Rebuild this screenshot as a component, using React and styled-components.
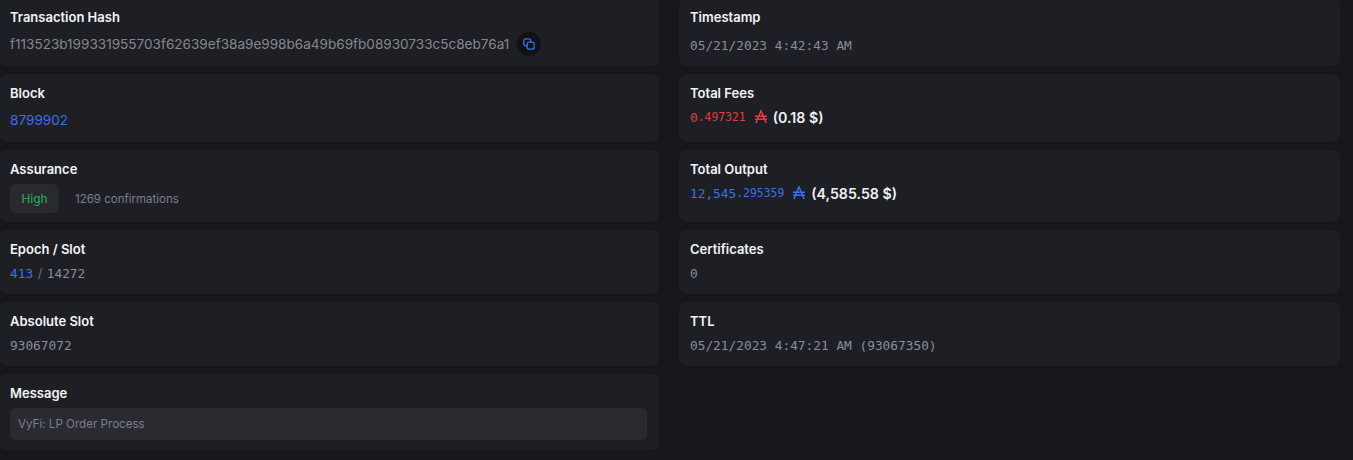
import React from "react";
import styled, { createGlobalStyle } from "styled-components";

const Global = createGlobalStyle`
  html, body {
    margin: 0;
    height: 100%;
    overflow: hidden;
    background: #17181b;
  }
`;

const Page = styled.div`
  display: grid;
  grid-template-columns: 660px 661px;
  grid-template-rows: 68px 68px 72px 64px 64px 76px;
  column-gap: 20px;
  row-gap: 8px;
  margin: -2px 0 0 -1px;
  font-family: "Inter", "Noto Sans", sans-serif;
`;

const Card = styled.div`
  background: #1e1f24;
  border-radius: 8px;
  padding: 10px 12px 10px 11px;
  box-sizing: border-box;
`;

const Title = styled.div`
  font-size: 13px;
  font-weight: 600;
  line-height: 18px;
  color: #f4f4f6;
  margin-bottom: 6px;
`;

const Row = styled.div`
  display: flex;
  align-items: center;
  min-height: ${(p) => p.$h || 18}px;
`;

const Hash = styled.span`
  font-size: 13.55px;
  color: #85878f;
`;

const CopyButton = styled.span`
  display: flex;
  align-items: center;
  justify-content: center;
  width: 24px;
  height: 24px;
  margin-left: 8px;
  border-radius: 50%;
  background: #111216;
  color: #3f6fe8;
`;

const BlockLink = styled.span`
  font-size: 13.6px;
  color: #3d6ef0;
`;

const Mono = styled.span`
  font-family: "DejaVu Sans Mono", "Liberation Mono", monospace;
  font-size: 12.8px;
  color: ${(p) => p.$color || "#8a8d9c"};
`;

const Small = styled.span`
  font-family: "DejaVu Sans Mono", "Liberation Mono", monospace;
  font-size: 11.4px;
  color: ${(p) => p.$color};
`;

const Fiat = styled.span`
  font-size: 14.2px;
  font-weight: 600;
  color: #f1f1f4;
  margin-left: 6px;
`;

const Badge = styled.span`
  display: flex;
  align-items: center;
  justify-content: center;
  width: 49px;
  height: 29px;
  border-radius: 6px;
  background: #282a2f;
  color: #2f9e4f;
  font-size: 11.8px;
  font-weight: 500;
`;

const Confirmations = styled.span`
  margin-left: 16px;
  font-size: 11.5px;
  color: #7c7e92;
`;

const Slash = styled.span`
  margin: 0 4.5px;
  font-size: 12.8px;
  color: #6d6f77;
`;

const MessageBox = styled.div`
  display: flex;
  align-items: center;
  height: 32px;
  padding: 0 8px;
  border-radius: 6px;
  background: #2a2b30;
  color: #7c7e8e;
  font-size: 11.6px;
`;

const AdaIcon = styled.svg`
  width: 12px;
  height: 13px;
  margin: 0 0 2px 9px;
  color: ${(p) => p.$color};
`;

const Ada = ({ color }) => (
  <AdaIcon $color={color} viewBox="0 0 12 13" fill="none" stroke="currentColor" strokeWidth="1.5">
    <path d="M0.9 13 6 0.8 11.1 13M0 6.2h12M0 9.2h12" />
  </AdaIcon>
);

const App = () => (
  <Page>
    <Global />
    <Card>
      <Title>Transaction Hash</Title>
      <Row $h={24}>
        <Hash>f113523b199331955703f62639ef38a9e998b6a49b69fb08930733c5c8eb76a1</Hash>
        <CopyButton>
          <svg width="12" height="12" viewBox="0 0 12 12" fill="none" stroke="currentColor" strokeWidth="1.3">
            <rect x="0.8" y="0.8" width="7" height="7" rx="2" />
            <rect x="4.2" y="4.2" width="7" height="7" rx="2" fill="#111216" />
          </svg>
        </CopyButton>
      </Row>
    </Card>
    <Card>
      <Title>Timestamp</Title>
      <Row $h={26}>
        <Mono>05/21/2023 4:42:43 AM</Mono>
      </Row>
    </Card>

    <Card>
      <Title>Block</Title>
      <Row $h={24}>
        <BlockLink>8799902</BlockLink>
      </Row>
    </Card>
    <Card>
      <Title>Total Fees</Title>
      <Row>
        <Mono $color="#e03e3e">0</Mono>
        <Small $color="#e03e3e">.497321</Small>
        <Ada color="#e03e3e" />
        <Fiat>(0.18 $)</Fiat>
      </Row>
    </Card>

    <Card>
      <Title>Assurance</Title>
      <Row $h={29}>
        <Badge>High</Badge>
        <Confirmations>1269 confirmations</Confirmations>
      </Row>
    </Card>
    <Card>
      <Title>Total Output</Title>
      <Row>
        <Mono $color="#3d6ef0">12,545</Mono>
        <Small $color="#3d6ef0">.295359</Small>
        <Ada color="#3d6ef0" />
        <Fiat>(4,585.58 $)</Fiat>
      </Row>
    </Card>

    <Card>
      <Title>Epoch / Slot</Title>
      <Row>
        <Mono $color="#3d6ef0">413</Mono>
        <Slash>/</Slash>
        <Mono>14272</Mono>
      </Row>
    </Card>
    <Card>
      <Title>Certificates</Title>
      <Row>
        <Mono>0</Mono>
      </Row>
    </Card>

    <Card>
      <Title>Absolute Slot</Title>
      <Row>
        <Mono>93067072</Mono>
      </Row>
    </Card>
    <Card>
      <Title>TTL</Title>
      <Row>
        <Mono>05/21/2023 4:47:21 AM (93067350)</Mono>
      </Row>
    </Card>

    <Card>
      <Title>Message</Title>
      <MessageBox>VyFi: LP Order Process</MessageBox>
    </Card>
  </Page>
);

export default App;
